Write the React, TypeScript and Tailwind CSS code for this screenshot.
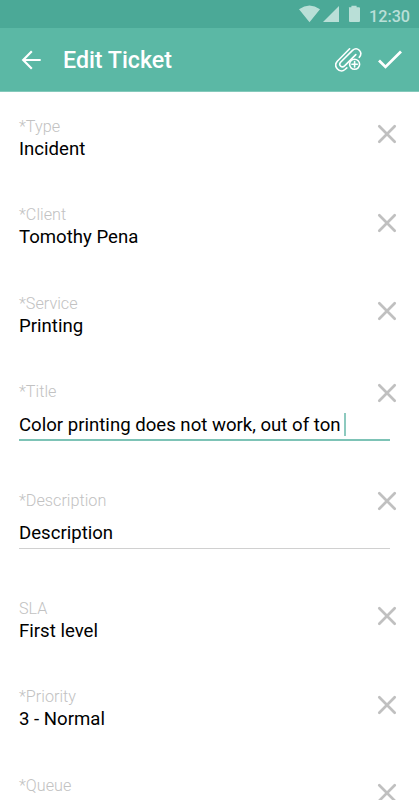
type FieldProps = { label: string; value: string; kind?: "plain" | "active" | "input" };

function Clear() {
  return (
    <svg width="20" height="20" viewBox="0 0 20 20" fill="none" stroke="#c0c0c0" strokeWidth="2.7" strokeLinecap="round" aria-hidden="true">
      <path d="M2.3 2.3 17.7 17.7M17.7 2.3 2.3 17.7" />
    </svg>
  );
}

function Field({ label, value, kind = "plain" }: FieldProps) {
  const plain = kind === "plain";
  return (
    <div className={`flex shrink-0 items-start ${plain ? "h-[88.5px]" : "h-[108.3px]"}`}>
      <div className="flex w-[371px] shrink-0 flex-col">
        <label className="h-5 pt-[0.8px] text-[16.2px] leading-5 font-light text-[#c2c2c2]">{label}</label>
        <div
          className={`flex items-center text-[18.6px] leading-6 whitespace-nowrap text-black ${
            plain ? "mt-[0.9px] h-6" : kind === "active" ? "mt-[7.5px] h-[32px] border-b-2 border-[#7dc3b6] pt-[1.5px]" : "mt-[8px] h-[31px] border-b border-[#d0d0d0]"
          }`}
        >
          <span>{value}</span>
          {kind === "active" && <span className="ml-[3.5px] h-[23px] w-[2px] bg-[#8dcabf]" />}
        </div>
      </div>
      <button aria-label={`Clear ${label}`} className={`-ml-[13px] shrink-0 ${plain ? "mt-2" : "mt-[1.2px]"}`}>
        <Clear />
      </button>
    </div>
  );
}

export default function App() {
  return (
    <div className="flex h-[800px] w-[419px] flex-col overflow-hidden bg-white font-[Roboto,sans-serif]">
      <div className="flex h-7 shrink-0 items-center bg-[#4ba997] pl-[298px] text-[#b9dfd7]">
        <svg width="68" height="28" viewBox="298 0 68 28" fill="currentColor" aria-hidden="true">
          <path d="M299 9.2Q309.5 2 320 9.2L309.5 22.3ZM339 6v16h-16ZM349 7.2h2.4V5.7h5.2v1.5h2.4a1 1 0 0 1 1 1V21a1 1 0 0 1-1 1h-9a1 1 0 0 1-1-1V8.2a1 1 0 0 1 0-1Z" />
        </svg>
        <span className="ml-[3px] pt-[5px] text-[16.2px] leading-5 font-medium">12:30</span>
      </div>
      <header className="flex h-16 shrink-0 items-center border-b border-[#84c9bb] bg-[#5bb8a5] pl-[21px] text-white">
        <svg width="21" height="20" viewBox="0 0 21 20" fill="none" stroke="currentColor" strokeWidth="2.2" aria-hidden="true">
          <path d="M10.8 1.3 2.2 10l8.6 8.7M2.2 10h17.5" />
        </svg>
        <h1 className="ml-[21px] w-[272px] pt-[1px] text-[23.2px] leading-7 font-medium">Edit Ticket</h1>
        <svg width="27" height="26" viewBox="335 47 27 26" fill="none" stroke="currentColor" strokeWidth="1.6" strokeLinecap="round" aria-hidden="true">
          <path d="M349.6 48.8 337.3 61.3c-4.6 5.2 2.4 12.6 7.6 8.2l1.9-1.7" />
          <path d="M359.3 57.3c4.2-5.2-2-11.2-6.8-6.9L340.6 62.2c-2.5 2.9 1.3 6.3 4 3.7L355.8 54.6" />
          <circle cx="354.6" cy="64.3" r="5" />
          <path d="M354.6 61.6v5.4M351.9 64.3h5.4" />
        </svg>
        <svg className="ml-[16px]" width="24" height="20" viewBox="0 0 24 20" fill="none" stroke="currentColor" strokeWidth="2.8" aria-hidden="true">
          <path d="m1 10.5 6.5 6.4L23 1.5" />
        </svg>
      </header>
      <main className="flex min-h-0 flex-1 flex-col overflow-hidden pt-6 pl-[19px]">
        <Field label="*Type" value="Incident" />
        <Field label="*Client" value="Tomothy Pena" />
        <Field label="*Service" value="Printing" />
        <Field label="*Title" value="Color printing does not work, out of ton" kind="active" />
        <Field label="*Description" value="Description" kind="input" />
        <Field label="SLA" value="First level" />
        <Field label="*Priority" value="3 - Normal" />
        <Field label="*Queue" value="" />
      </main>
    </div>
  );
}
